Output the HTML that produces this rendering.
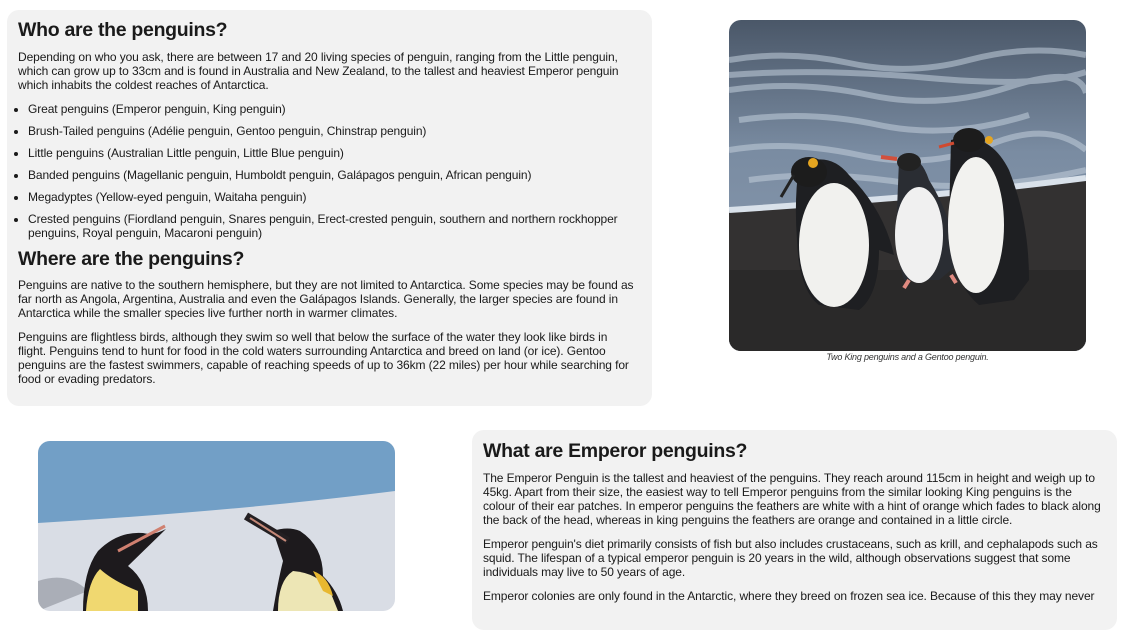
<!DOCTYPE html>
<html><head><meta charset="utf-8"><style>
*{margin:0;padding:0;box-sizing:border-box}
body{width:1127px;height:600px;overflow:hidden;background:#fff;font-family:"Liberation Sans",Arial,sans-serif;color:#1a1a1a;position:relative}
.card{position:absolute;background:#f2f2f2;border-radius:12px}
h2{font-size:19.5px;font-weight:bold;letter-spacing:-0.3px;line-height:22px;position:absolute;left:11px}
p,li{font-size:12px;line-height:14px;letter-spacing:-0.1px}
.t{position:absolute;left:11px;right:14px}
ul{position:absolute;left:21px;right:14px;list-style:disc}
li{margin-bottom:8px;padding-left:0}
.img{position:absolute;border-radius:12px;overflow:hidden}
.cap{position:absolute;left:729px;width:357px;top:352px;text-align:center;font-size:9px;font-style:italic;color:#333;letter-spacing:-0.2px}
</style></head><body>
<div class="card" style="left:7px;top:10px;width:645px;height:396px">
<h2 style="top:9px">Who are the penguins?</h2>
<p class="t" style="top:40px">Depending on who you ask, there are between 17 and 20 living species of penguin, ranging from the Little penguin, which can grow up to 33cm and is found in Australia and New Zealand, to the tallest and heaviest Emperor penguin which inhabits the coldest reaches of Antarctica.</p>
<ul style="top:92px">
<li>Great penguins (Emperor penguin, King penguin)</li>
<li>Brush-Tailed penguins (Adélie penguin, Gentoo penguin, Chinstrap penguin)</li>
<li>Little penguins (Australian Little penguin, Little Blue penguin)</li>
<li>Banded penguins (Magellanic penguin, Humboldt penguin, Galápagos penguin, African penguin)</li>
<li>Megadyptes (Yellow-eyed penguin, Waitaha penguin)</li>
<li>Crested penguins (Fiordland penguin, Snares penguin, Erect-crested penguin, southern and northern rockhopper penguins, Royal penguin, Macaroni penguin)</li>
</ul>
<h2 style="top:238px">Where are the penguins?</h2>
<p class="t" style="top:268px">Penguins are native to the southern hemisphere, but they are not limited to Antarctica. Some species may be found as far north as Angola, Argentina, Australia and even the Galápagos Islands. Generally, the larger species are found in Antarctica while the smaller species live further north in warmer climates.</p>
<p class="t" style="top:320px">Penguins are flightless birds, although they swim so well that below the surface of the water they look like birds in flight. Penguins tend to hunt for food in the cold waters surrounding Antarctica and breed on land (or ice). Gentoo penguins are the fastest swimmers, capable of reaching speeds of up to 36km (22 miles) per hour while searching for food or evading predators.</p>
</div>

<div class="img" style="left:729px;top:20px;width:357px;height:331px">
<svg width="357" height="331" viewBox="0 0 357 331">
<defs><linearGradient id="sea" x1="0" y1="0" x2="0" y2="1"><stop offset="0" stop-color="#4a5768"/><stop offset="0.4" stop-color="#7a8ca2"/><stop offset="1" stop-color="#8d9db2"/></linearGradient></defs>
<rect width="357" height="331" fill="url(#sea)"/>
<g fill="none" stroke="#c3cfdc" stroke-width="6" opacity="0.55">
<path d="M0 40 Q60 30 120 43 T240 40 T357 35"/><path d="M0 70 Q70 60 140 75 T280 67 T357 73"/><path d="M10 100 Q80 90 150 105 T300 95"/><path d="M0 130 Q60 120 130 135 T260 125 T357 130"/><path d="M20 160 Q90 150 170 162 T357 150"/><path d="M0 55 Q90 48 200 58 T357 52"/>
</g>
<path d="M0 190 Q120 182 200 175 T357 158 L357 331 L0 331Z" fill="#333131"/>
<path d="M0 190 Q120 182 200 175 T357 158" stroke="#d9e1ea" stroke-width="6" fill="none"/>
<rect y="250" width="357" height="81" fill="#2a2929"/>
<path d="M70 145 Q100 130 120 155 Q155 190 165 235 L150 230 Q150 275 130 290 L90 285 Q70 270 68 220 Q65 180 70 145Z" fill="#1e1f22"/>
<ellipse cx="105" cy="225" rx="35" ry="62" fill="#f1f1ee"/>
<ellipse cx="80" cy="152" rx="18" ry="15" fill="#1c1c1c"/>
<path d="M65 155 L52 177" stroke="#222" stroke-width="3"/>
<circle cx="84" cy="143" r="5" fill="#e5a520"/>
<path d="M170 140 Q190 130 200 160 Q225 200 228 245 L210 260 L175 260 Q165 230 168 190Z" fill="#2a2d33"/>
<ellipse cx="190" cy="215" rx="24" ry="48" fill="#f0f0f0"/>
<ellipse cx="180" cy="142" rx="12" ry="9" fill="#222"/>
<path d="M168 139 L152 137" stroke="#d2503c" stroke-width="4"/>
<path d="M180 260 l-5 8 M222 255 l5 8" stroke="#e08a80" stroke-width="4"/>
<path d="M222 120 Q260 110 280 150 Q300 200 300 260 L285 280 L250 285 Q220 260 220 200Z" fill="#1e1f22"/>
<ellipse cx="247" cy="205" rx="28" ry="68" fill="#f2f2ef"/>
<ellipse cx="240" cy="120" rx="16" ry="12" fill="#1c1c1c"/>
<path d="M225 123 L210 127" stroke="#d04a30" stroke-width="3"/>
<circle cx="260" cy="120" r="4" fill="#e5a520"/>
</svg>
</div>
<div class="cap">Two King penguins and a Gentoo penguin.</div>

<div class="img" style="left:38px;top:441px;width:357px;height:170px">
<svg width="357" height="170" viewBox="0 0 357 170">
<rect width="357" height="170" fill="#d9dde5"/>
<path d="M0 0 H357 V50 Q200 70 0 82Z" fill="#729fc6"/>
<path d="M0 140 Q30 130 50 150 L0 170Z" fill="#8b8f98" opacity="0.6"/>
<path d="M45 170 Q45 130 60 110 Q80 90 105 92 Q115 95 128 88 L90 125 Q110 140 110 170Z" fill="#1d1a1d"/>
<path d="M48 170 Q50 140 62 128 Q75 140 100 150 L100 170Z" fill="#f0d870"/>
<path d="M80 110 L127 85" stroke="#d08070" stroke-width="3"/>
<path d="M235 90 Q250 85 262 90 Q285 105 285 135 Q300 150 305 170 L235 170 Q240 140 245 120 Z" fill="#1d1a1d"/>
<path d="M208 75 L250 100" stroke="#231f22" stroke-width="8"/>
<path d="M212 77 L248 100" stroke="#c48878" stroke-width="2"/>
<path d="M240 170 Q240 140 255 130 Q280 132 292 150 L300 170Z" fill="#ede6b5"/>
<path d="M275 130 Q290 135 295 155 L285 150Z" fill="#e8b830"/>
</svg>
</div>

<div class="card" style="left:472px;top:430px;width:645px;height:200px">
<h2 style="top:10px">What are Emperor penguins?</h2>
<p class="t" style="top:41px">The Emperor Penguin is the tallest and heaviest of the penguins. They reach around 115cm in height and weigh up to 45kg. Apart from their size, the easiest way to tell Emperor penguins from the similar looking King penguins is the colour of their ear patches. In emperor penguins the feathers are white with a hint of orange which fades to black along the back of the head, whereas in king penguins the feathers are orange and contained in a little circle.</p>
<p class="t" style="top:107px">Emperor penguin's diet primarily consists of fish but also includes crustaceans, such as krill, and cephalapods such as squid. The lifespan of a typical emperor penguin is 20 years in the wild, although observations suggest that some individuals may live to 50 years of age.</p>
<p class="t" style="top:159px">Emperor colonies are only found in the Antarctic, where they breed on frozen sea ice. Because of this they may never</p>
</div>
</body></html>
